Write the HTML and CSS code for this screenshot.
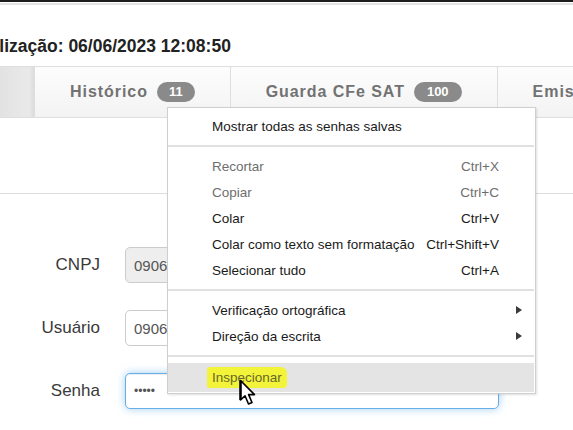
FILE: index.html
```html
<!DOCTYPE html>
<html lang="pt-BR">
<head>
<meta charset="utf-8">
<title>Login SAT</title>
<link rel="stylesheet" href="styles.css">
</head>
<body>
<div class="topbar"></div>
<div class="updated"><span class="updated-text">Última atualização: 06/06/2023 12:08:50</span></div>
<nav class="tabs">
  <div class="tab tab-active"></div>
  <div class="tab"><span class="tab-label">Histórico</span><span class="badge">11</span></div>
  <div class="tab"><span class="tab-label">Guarda CFe SAT</span><span class="badge badge-wide">100</span></div>
  <div class="tab"><span class="tab-label">Emissão</span></div>
</nav>
<div class="panel-head"></div>
<form class="login">
  <div class="row">
    <label class="label">CNPJ</label>
    <input class="field field-disabled" type="text" value="09069565000181" readonly>
  </div>
  <div class="row">
    <label class="label">Usuário</label>
    <input class="field" type="text" value="09069565000181">
  </div>
  <div class="row">
    <label class="label">Senha</label>
    <input class="field field-focus" type="password" value="12345">
  </div>
</form>

<div class="context-menu">
  <div class="item">Mostrar todas as senhas salvas</div>
  <div class="sep"></div>
  <div class="item item-disabled"><span>Recortar</span><span class="key">Ctrl+X</span></div>
  <div class="item item-disabled"><span>Copiar</span><span class="key">Ctrl+C</span></div>
  <div class="item"><span>Colar</span><span class="key">Ctrl+V</span></div>
  <div class="item"><span>Colar como texto sem formatação</span><span class="key">Ctrl+Shift+V</span></div>
  <div class="item"><span>Selecionar tudo</span><span class="key">Ctrl+A</span></div>
  <div class="sep"></div>
  <div class="item item-sub"><span>Verificação ortográfica</span><span class="arrow"></span></div>
  <div class="item item-sub"><span>Direção da escrita</span><span class="arrow"></span></div>
  <div class="sep"></div>
  <div class="item item-hover"><span class="marker">Inspecionar</span></div>
</div>

<svg class="cursor" width="18" height="28" viewBox="0 0 18 28">
  <path d="M1.5 1.5 L1.5 21 L6 16.8 L9.5 25 L13 23.5 L9.6 15.6 L15.5 15.6 Z" fill="#fff" stroke="#000" stroke-width="1.6" stroke-linejoin="round"/>
  <path d="M1.5 1.5 L1.5 21" stroke="#000" stroke-width="2.4"/>
</svg>
</body>
</html>
```

FILE: styles.css
```css
html, body {
  margin: 0;
  padding: 0;
  background: #fff;
  overflow: hidden;
}

body {
  width: 573px;
  height: 430px;
  font-family: "Liberation Sans", Arial, sans-serif;
  color: #333;
  position: relative;
}

.topbar {
  height: 2px;
  background: #1d1d1d;
  border-bottom: 1px solid #fff;
  box-shadow: 0 2px 0 #e4e4e4;
}

.updated {
  margin-top: 33px;
  height: 20px;
  line-height: 20px;
  white-space: nowrap;
  overflow: hidden;
}

.updated-text {
  display: inline-block;
  margin-left: -95px;
  font-size: 17.5px;
  font-weight: bold;
  color: #222;
}

.tabs {
  margin-top: 10px;
  display: flex;
  flex-wrap: nowrap;
  border-top: 1px solid #dedede;
  border-bottom: 1px solid #dedede;
  height: 50px;
  overflow: hidden;
}

.tab {
  flex: 0 0 auto;
  display: flex;
  align-items: center;
  gap: 9px;
  padding: 0 35px;
  border-right: 1px solid #dedede;
  background: linear-gradient(#fdfdfd, #f3f3f3);
  white-space: nowrap;
}

.tab-active {
  width: 34px;
  padding: 0;
  background: linear-gradient(90deg, #e2e2e2, #e9e9e9 85%, #dcdcdc);
}

.tab-label {
  font-size: 16px;
  font-weight: bold;
  letter-spacing: 0.95px;
  color: #727272;
}

.badge {
  display: inline-block;
  height: 20px;
  line-height: 20px;
  padding: 0 12px;
  border-radius: 10px;
  background: #8a8a8a;
  color: #fff;
  font-size: 13px;
  font-weight: bold;
}

.badge-wide {
  padding: 0 13px;
}

.panel-head {
  height: 75px;
  border-bottom: 1px solid #dedede;
}

.login {
  margin: 53px 0 0;
  display: flex;
  flex-direction: column;
  gap: 27px;
}

.row {
  display: flex;
  align-items: center;
  gap: 25px;
}

.label {
  width: 100px;
  text-align: right;
  font-size: 17px;
  color: #3a3a3a;
}

.field {
  box-sizing: border-box;
  width: 374px;
  height: 36px;
  padding: 0 8px;
  border: 1px solid #cccccc;
  border-radius: 5px;
  font-family: "Liberation Sans", Arial, sans-serif;
  font-size: 15px;
  color: #555;
  background: #fff;
  outline: none;
}

.field-disabled {
  background: #eeeeee;
}

.field-focus {
  border-color: #66afe9;
  font-size: 12px;
  box-shadow: inset 0 1px 1px rgba(0,0,0,.075), 0 0 8px rgba(102,175,233,.6);
}

.context-menu {
  position: absolute;
  left: 167px;
  top: 107px;
  width: 366px;
  padding: 5px 1px 1px 0;
  background: #fff;
  border: 1px solid #cfcfcf;
  box-shadow: 1px 1px 2px rgba(0,0,0,.12);
  font-size: 13.5px;
  color: #1a1a1a;
}

.item {
  display: flex;
  align-items: center;
  height: 26px;
  padding: 0 35px 0 44px;
  white-space: nowrap;
}

.item .key {
  margin-left: auto;
}

.item-disabled {
  color: #6e6e6e;
}

.item-sub {
  padding-right: 12px;
}

.arrow {
  margin-left: auto;
  width: 0;
  height: 0;
  border-left: 6px solid #3a3a3a;
  border-top: 4.5px solid transparent;
  border-bottom: 4.5px solid transparent;
}

.sep {
  height: 2px;
  margin: 6px 0;
  background: #e0e0e0;
}

.item-hover {
  height: 29px;
  background: #e4e4e4;
}

.marker {
  margin-left: -5px;
  padding: 3px 5px 3px;
  border-radius: 3px 6px 4px 2px;
  background: #f3f43a;
  color: #67672c;
}

.cursor {
  position: absolute;
  left: 239px;
  top: 379px;
}
```
